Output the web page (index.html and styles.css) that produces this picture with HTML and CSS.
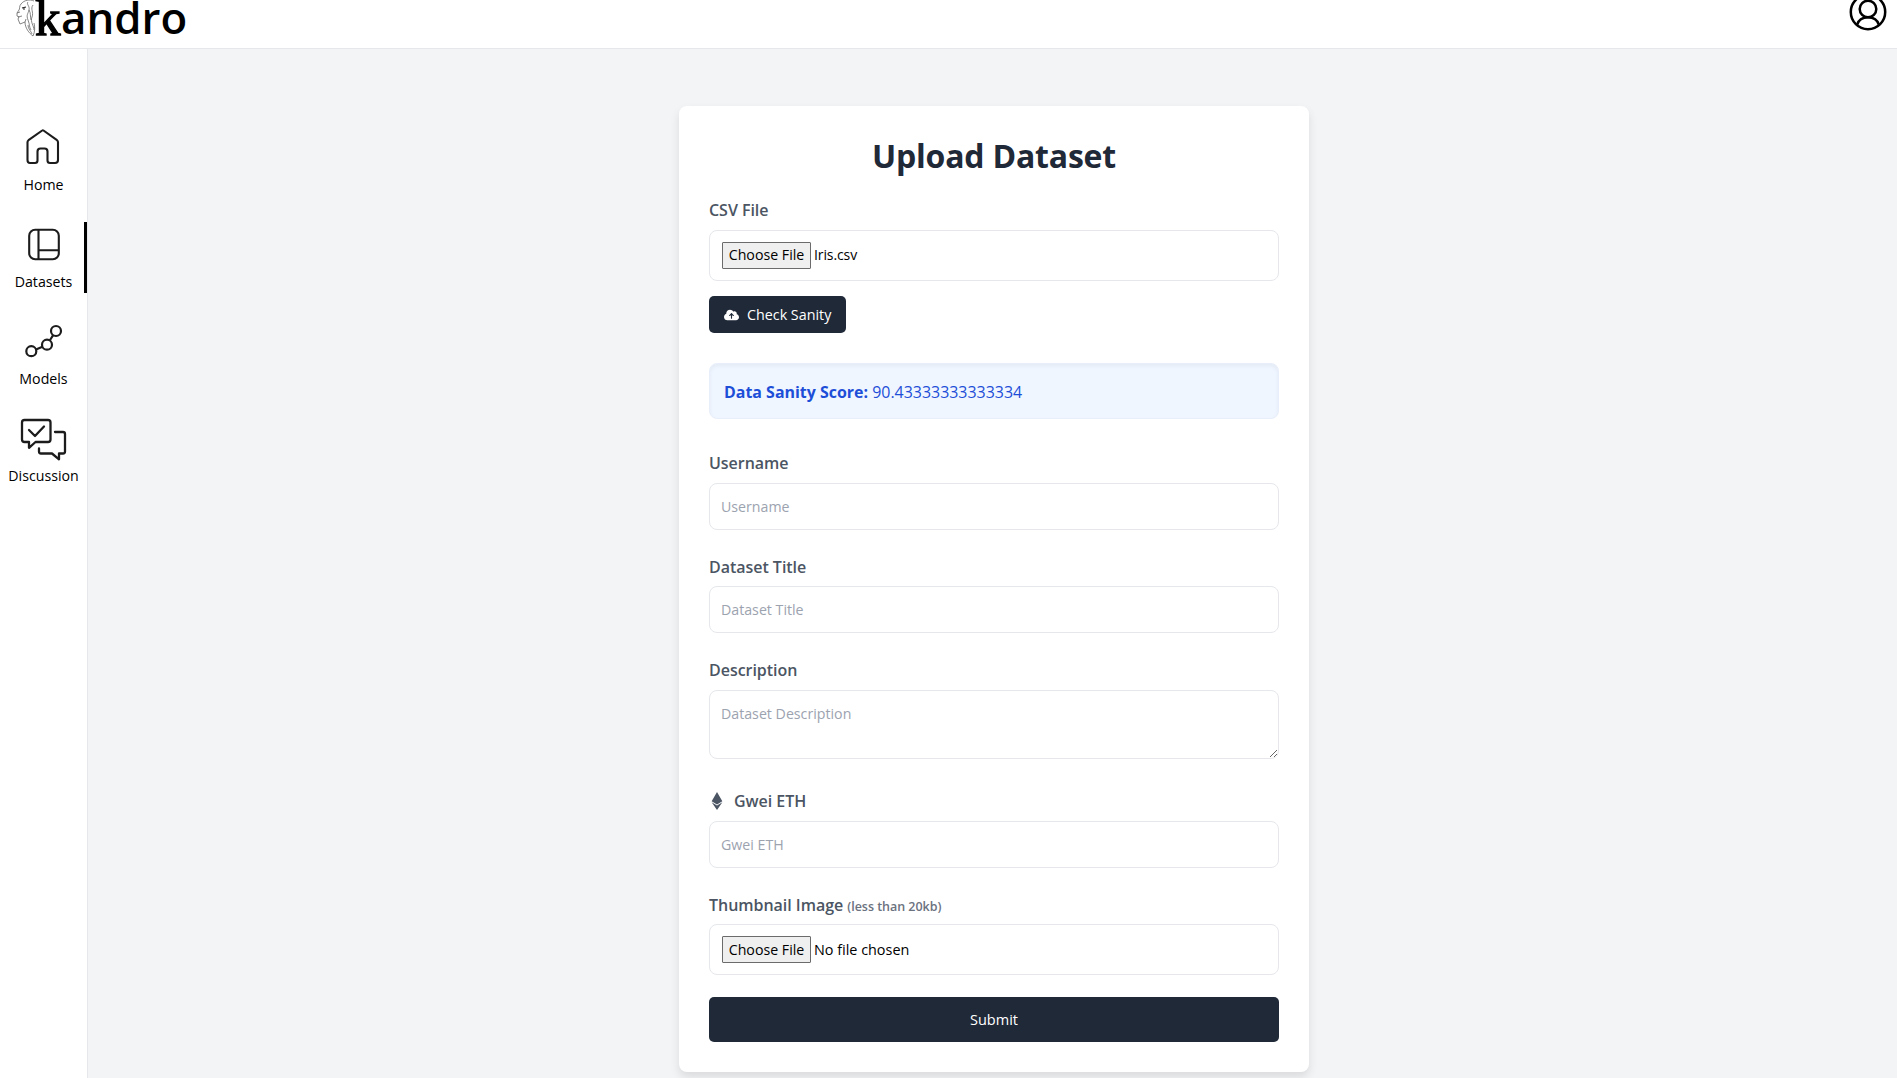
FILE: index.html
```html
<!DOCTYPE html>
<html lang="en">
<head>
<meta charset="utf-8">
<title>kandro</title>
<link rel="stylesheet" href="styles.css">
</head>
<body>
<header class="topbar">
  <a class="brand">
    <svg class="brand-lion" width="20" height="37" viewBox="0 0 20 37" fill="none" stroke="#666" stroke-width="0.800">
      <path d="M18 1C14-1 8 0 5 4C3 6 4 9 3 10L1 13V16L3 17L2 19L4 24L9 22L10 19M1 13L4 12M2 17L6 16M12 2C10 4 14 6 13 10S10 15 12 20S13 27 15 30M17 5C14 9 18 12 16 17S18 26 18 30M13 10C15 13 14 16 15 20M9 22C9 28 13 33 17 36C19 32 19 27 18 23M12 25C12 29 15 31 16 34"/>
      <path d="M6 8L10 7M7 9H9" stroke="#222" stroke-width="1.200"/>
    </svg>
    <span class="brand-k">k</span><span class="brand-name">andro</span>
  </a>
  <svg class="avatar" width="38" height="38" viewBox="0 0 38 38" fill="none" stroke="#000" stroke-width="2.500">
    <circle cx="19" cy="19" r="17.200"/><circle cx="19" cy="16" r="8.300"/><path d="M8 32C9.500 27 13.500 24.300 19 24.300S28.500 27 30 32"/>
  </svg>
</header>
<div class="shell">
  <nav class="sidebar">
    <a class="nav-item">
      <svg width="48" height="48" viewBox="0 0 48 48" fill="none" stroke="#1c1c1c" stroke-width="2.100" stroke-linejoin="round"><path d="M22.200 6.500Q22.800 6 23.500 6.500L37 16.200Q38 17 38 18.300V36Q38 39 35 39H30Q27.500 39 27.500 36.500V27.500Q27.500 24.500 24.500 24.500H20.500Q17.500 24.500 17.500 27.500V36.500Q17.500 39 15 39H10Q7.500 39 7.500 36V18.300Q7.500 17 8.500 16.200Z"/></svg>
      <span class="nav-label">Home</span>
    </a>
    <a class="nav-item active">
      <svg width="48" height="48" viewBox="0 0 48 48" fill="none" stroke="#1c1c1c" stroke-width="2.100"><rect x="9.200" y="7.700" width="29.600" height="29.600" rx="6"/><path d="M18.500 7.500V37.500M18.500 28.200H39"/></svg>
      <span class="nav-label">Datasets</span>
    </a>
    <a class="nav-item">
      <svg width="48" height="48" viewBox="0 0 48 48" fill="none" stroke="#1c1c1c" stroke-width="2.200"><circle cx="11.300" cy="33.200" r="5"/><circle cx="27" cy="26.700" r="5"/><circle cx="36" cy="13" r="5"/><path d="M16 31.400L22.400 28.700M29.700 22.500L33.200 17.200"/></svg>
      <span class="nav-label">Models</span>
    </a>
    <a class="nav-item">
      <svg width="48" height="48" viewBox="0 0 48 48" fill="none" stroke="#1c1c1c" stroke-width="2.300" stroke-linecap="round" stroke-linejoin="round"><path d="M4.500 5H28Q30.500 5 30.500 7.500V24.500Q30.500 27 28 27H15.500L9 32.800V27H4.500Q2 27 2 24.500V7.500Q2 5 4.500 5M9 15L15 21 24 11.500M35 17H43Q45 17 45 19V36.500Q45 38.500 43 38.500H39V44.300L32 38.500H21Q19 38.500 19 36.500V33.500"/></svg>
      <span class="nav-label">Discussion</span>
    </a>
  </nav>
  <main class="content">
    <form class="card">
      <h1 class="title">Upload Dataset</h1>
      <label class="label">CSV File</label>
      <div class="file"><button type="button" class="choose">Choose File</button><span class="file-name">Iris.csv</span></div>
      <button type="button" class="check"><svg width="15" height="12" viewBox="0 0 640 512" fill="#fff"><path d="M144 480C64.500 480 0 415.500 0 336c0-62.800 40.200-116.200 96.200-135.900c-.1-2.700-.2-5.400-.2-8.100c0-88.400 71.600-160 160-160c59.300 0 111 32.200 138.700 80.200C409.900 102 428.300 96 448 96c53 0 96 43 96 96c0 12.200-2.300 23.800-6.400 34.600C596 238.400 640 290.100 640 352c0 70.700-57.300 128-128 128H144zm79-217c-9.400 9.400-9.400 24.600 0 33.900s24.600 9.400 33.900 0l39-39V392c0 13.300 10.700 24 24 24s24-10.700 24-24V257.900l39 39c9.400 9.400 24.600 9.400 33.900 0s9.400-24.600 0-33.900l-80-80c-9.400-9.400-24.600-9.400-33.900 0l-80 80z"/></svg>Check Sanity</button>
      <div class="score"><strong>Data Sanity Score:</strong> 90.43333333333334</div>
      <label class="label">Username</label>
      <input class="field" placeholder="Username">
      <label class="label">Dataset Title</label>
      <input class="field" placeholder="Dataset Title">
      <label class="label">Description</label>
      <textarea class="field area" placeholder="Dataset Description"></textarea>
      <label class="label"><svg class="eth" width="12" height="18" viewBox="0 0 320 512" fill="#4b5563"><path d="M311.900 260.800L160 353.600 8 260.800 160 0l151.900 260.800zM160 383.400L8 290.600 160 512l152-221.400-152 92.800z"/></svg>Gwei ETH</label>
      <input class="field" placeholder="Gwei ETH">
      <label class="label">Thumbnail Image <small class="hint">(less than 20kb)</small></label>
      <div class="file"><button type="button" class="choose">Choose File</button><span>No file chosen</span></div>
      <button type="button" class="submit">Submit</button>
    </form>
  </main>
</div>
</body>
</html>
```
FILE: styles.css
```css
* { box-sizing: border-box; }
body {
  margin: 0;
  height: 1078px;
  overflow: hidden;
  display: flex;
  flex-direction: column;
  background: #f3f4f6;
  color: #000;
  font: 15px/24px "Open Sans", "Noto Sans", sans-serif;
}
button, input, textarea { font: inherit; color: inherit; }
.topbar {
  height: 49px;
  flex: none;
  display: flex;
  justify-content: space-between;
  padding: 0 10px 0 16px;
  background: #fff;
  border-bottom: 1px solid #e5e7eb;
  overflow: hidden;
}
.brand { display: flex; height: 37px; align-items: flex-start; }
.brand-lion { margin-right: -1px; }
.brand-k {
  width: 26px;
  margin-top: -6px;
  font: 51px/48px "Liberation Serif", serif;
  -webkit-text-stroke: 1.300px #000;
}
.brand-name { font-size: 43.800px; font-weight: 600; line-height: 54px; margin-top: -10px; }
.avatar { margin-top: -7px; }
.shell { flex: 1; display: flex; min-height: 0; }
.sidebar {
  width: 88px;
  flex: none;
  background: #fff;
  border-right: 1px solid #e5e7eb;
  padding-top: 75px;
  display: flex;
  flex-direction: column;
  gap: 26px;
}
.nav-item {
  height: 71px;
  display: flex;
  flex-direction: column;
  align-items: center;
}
.nav-item svg { flex: none; }
.nav-item.active { position: relative; top: 1px; border-right: 3px solid #000; padding-left: 3px; }
.nav-label { font-size: 14.200px; font-weight: 500; line-height: 26px; }
.active .nav-label { line-height: 24px; }
.content { flex: 1; padding: 57px 0 0 3px; }
.card {
  width: 630px;
  height: 966px;
  margin: 0 auto;
  padding: 30px;
  background: #fff;
  border-radius: 8px;
  box-shadow: 0 5px 10px rgba(0, 0, 0, .1);
  display: flex;
  flex-direction: column;
}
.card > * { flex: none; }
.title {
  margin: 0 0 22px;
  font-size: 32px;
  line-height: 40px;
  font-weight: 700;
  letter-spacing: -.2px;
  color: #1f2937;
  text-align: center;
}
.label {
  height: 24px;
  margin-bottom: 7.500px;
  font-size: 16px;
  font-weight: 600;
  letter-spacing: -.03px;
  color: #4b5563;
}
.file, .field {
  width: 570px;
  border: 1px solid #e5e7eb;
  border-radius: 8px;
  background: #fff;
}
.file { height: 51px; padding: 0 12px; display: flex; align-items: center; gap: 3px; font-size: 14.400px; }
.file-name { font-size: 14px; letter-spacing: -.1px; }
.choose {
  height: 27px;
  width: 89px;
  padding: 0;
  border: 1px solid #6b6b6b;
  border-radius: 1px;
  background: #efefef;
  line-height: 24px;
  font-size: 14.200px;
}
.field { height: 47px; margin-bottom: 25px; padding: 0 11px; font-size: 14.200px; outline: 0; }
.field::placeholder { color: #9ca3af; opacity: 1; }
.area { height: 69px; padding: 11px; resize: vertical; margin-bottom: 30.500px; }
.check {
  width: 137px;
  height: 37px;
  margin: 15px 0 30px;
  padding: 1px 0 0 15px;
  display: flex;
  align-items: center;
  gap: 8px;
  border: 0;
  border-radius: 5px;
  background: #1f2937;
  color: #fff;
  font-size: 14.300px;
}
.score {
  height: 56px;
  margin-bottom: 32.500px;
  padding: 16px 14px;
  border: 1px solid #e8effa;
  border-radius: 8px;
  background: #eff6ff;
  box-shadow: inset 0 2px 4px rgba(0, 0, 0, .05);
  color: #1d4ed8;
  font-size: 15.950px;
}
.eth { margin: 0 11px -3px 2px; }
.hint { font-size: 12.500px; color: #6b7280; }
.submit {
  height: 45px;
  margin-top: 21.500px;
  padding: 2px 0 0;
  border: 0;
  border-radius: 5px;
  background: #1f2937;
  color: #fff;
  font-size: 14.500px;
}
```
